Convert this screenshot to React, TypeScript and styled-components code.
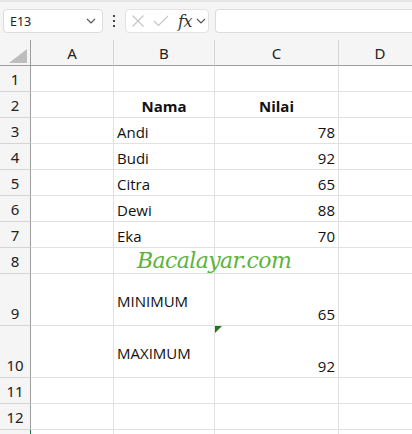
import React from "react";
import styled, { createGlobalStyle } from "styled-components";

const Global = createGlobalStyle`
  html, body { margin: 0; padding: 0; background: #fff; overflow: hidden; }
  body { font-family: "Open Sans", "Noto Sans", sans-serif; }
`;

const Page = styled.div`
  width: 412px;
  height: 434px;
  overflow: hidden;
  display: flex;
  flex-direction: column;
  background: #fff;
`;

const Toolbar = styled.div`
  height: 40px;
  flex-shrink: 0;
  box-sizing: border-box;
  background: #f5f5f5;
  border-top: 2px solid #e6e6e6;
  display: flex;
  align-items: flex-start;
  padding: 7px 0 0 3px;
`;

const NameBox = styled.div`
  width: 100px;
  height: 24px;
  box-sizing: border-box;
  background: #fff;
  border: 1px solid #dcdcdc;
  border-radius: 4px;
  display: flex;
  align-items: center;
  justify-content: space-between;
  padding: 0 6px 0 6px;
  font-family: "Noto Sans", sans-serif;
  font-size: 12.5px;
  color: #222;
`;

const Dots = styled.div`
  width: 22px;
  height: 24px;
  display: flex;
  align-items: center;
  justify-content: center;
`;

const FxBox = styled.div`
  width: 84px;
  height: 24px;
  box-sizing: border-box;
  background: #fff;
  border: 1px solid #e2e2e2;
  border-radius: 4px;
  display: flex;
  align-items: center;
  padding: 0 0 0 5px;
`;

const FxText = styled.span`
  font-family: "DejaVu Serif", "Liberation Serif", serif;
  font-style: italic;
  font-size: 16px;
  color: #333;
  margin-left: 9px;
  letter-spacing: -0.5px;
`;

const ChevronSlot = styled.span`
  margin-left: 4px;
  display: flex;
`;

const FormulaInput = styled.div`
  flex: 1;
  height: 24px;
  margin-left: 6px;
  box-sizing: border-box;
  background: #fff;
  border: 1px solid #dcdcdc;
  border-right: none;
  border-radius: 4px 0 0 4px;
`;

const Grid = styled.div`
  display: grid;
  grid-template-columns: 31px 83px 101px 124px 83px;
  grid-template-rows: 26px repeat(8, 26px) 52px 52px 26px 26px 26px;
`;

const Corner = styled.div`
  background: #f5f5f5;
  border-right: 1px solid #9e9e9e;
  border-bottom: 1px solid #9e9e9e;
  box-sizing: border-box;
  position: relative;
`;

const CornerTri = styled.svg`
  position: absolute;
  left: 9px;
  top: 9px;
`;

const ColHead = styled.div`
  background: #f5f5f5;
  border-right: 1px solid #d4d4d4;
  border-bottom: 1px solid #9e9e9e;
  box-sizing: border-box;
  display: flex;
  align-items: center;
  justify-content: center;
  font-family: "Noto Sans", sans-serif;
  font-size: 15px;
  color: #222;
`;

const RowHead = styled.div<{ $sel?: boolean }>`
  background: #f5f5f5;
  border-right: 1px solid ${(p) => (p.$sel ? "#1e7145" : "#9e9e9e")};
  border-bottom: 1px solid #d4d4d4;
  box-sizing: border-box;
  display: flex;
  align-items: flex-end;
  justify-content: center;
  padding-bottom: 2px;
  font-family: "Noto Sans", sans-serif;
  font-size: 15px;
  color: #222;
`;

const Cell = styled.div<{ $align?: "left" | "right" | "center"; $bold?: boolean }>`
  border-right: 1px solid #e1e1e1;
  border-bottom: 1px solid #e1e1e1;
  box-sizing: border-box;
  position: relative;
  display: flex;
  flex-direction: column;
  justify-content: flex-end;
  align-items: ${(p) =>
    p.$align === "right" ? "flex-end" : p.$align === "center" ? "center" : "flex-start"};
  padding: 0 3px 2px 3px;
  font-family: "Open Sans", sans-serif;
  font-size: 15px;
  font-weight: ${(p) => (p.$bold ? 700 : 400)};
  color: #111;
  line-height: 18px;
`;

const TwoLine = styled.div`
  display: flex;
  flex-direction: column;
  line-height: 18px;
`;

const Spacer = styled.span`
  height: 13px;
`;

const ErrorMark = styled.div`
  position: absolute;
  left: 0;
  top: 0;
  width: 0;
  height: 0;
  border-top: 7px solid #1e7a1e;
  border-right: 7px solid transparent;
`;

const Watermark = styled.div`
  position: absolute;
  left: 137px;
  top: 208px;
  font-family: "DejaVu Serif", "Liberation Serif", serif;
  font-style: italic;
  font-size: 22px;
  color: #5db33b;
  letter-spacing: -0.6px;
  pointer-events: none;
`;

const Wrap = styled.div`
  position: relative;
`;

const Chevron = () => (
  <svg width="10" height="6" viewBox="0 0 10 6">
    <path d="M1 1 L5 5 L9 1" fill="none" stroke="#555" strokeWidth="1.2" />
  </svg>
);

const cols = ["A", "B", "C", "D"];

type Row = { n: number; b?: string; c?: string; bold?: boolean; mark?: boolean; tall?: boolean };

const rows: Row[] = [
  { n: 1 },
  { n: 2, b: "Nama", c: "Nilai", bold: true },
  { n: 3, b: "Andi", c: "78" },
  { n: 4, b: "Budi", c: "92" },
  { n: 5, b: "Citra", c: "65" },
  { n: 6, b: "Dewi", c: "88" },
  { n: 7, b: "Eka", c: "70" },
  { n: 8 },
  { n: 9, b: "MINIMUM", c: "65", tall: true },
  { n: 10, b: "MAXIMUM", c: "92", mark: true, tall: true },
  { n: 11 },
  { n: 12 },
  { n: 13 },
];

export default function App() {
  return (
    <Page>
      <Global />
      <Toolbar>
        <NameBox>
          <span>E13</span>
          <Chevron />
        </NameBox>
        <Dots>
          <svg width="4" height="12" viewBox="0 0 4 12">
            <rect x="1" y="0" width="2" height="2" fill="#444" />
            <rect x="1" y="5" width="2" height="2" fill="#444" />
            <rect x="1" y="10" width="2" height="2" fill="#444" />
          </svg>
        </Dots>
        <FxBox>
          <svg width="14" height="14" viewBox="0 0 14 14">
            <path d="M1.5 1.5 L12.5 12.5 M12.5 1.5 L1.5 12.5" stroke="#c4c4c4" strokeWidth="1.1" />
          </svg>
          <svg width="16" height="12" viewBox="0 0 16 12" style={{ marginLeft: 8 }}>
            <path d="M1 6 L5.5 10.5 L15 1" fill="none" stroke="#c4c4c4" strokeWidth="1.1" />
          </svg>
          <FxText>fx</FxText>
          <ChevronSlot>
            <Chevron />
          </ChevronSlot>
        </FxBox>
        <FormulaInput />
      </Toolbar>
      <Wrap>
        <Grid>
          <Corner>
            <CornerTri width="18" height="14" viewBox="0 0 18 14">
              <path d="M18 0 L18 14 L0 14 Z" fill="#bdbdbd" />
            </CornerTri>
          </Corner>
          {cols.map((c) => (
            <ColHead key={c}>{c}</ColHead>
          ))}
          {rows.map((r) => (
            <React.Fragment key={r.n}>
              <RowHead $sel={r.n === 13}>{r.n === 13 ? "" : r.n}</RowHead>
              <Cell />
              <Cell $align={r.bold ? "center" : "left"} $bold={r.bold}>
                {r.tall ? (
                  <TwoLine>
                    <span>{r.b}</span>
                    <Spacer />
                  </TwoLine>
                ) : (
                  r.b
                )}
              </Cell>
              <Cell $align={r.bold ? "center" : "right"} $bold={r.bold}>
                {r.mark && <ErrorMark />}
                {r.c}
              </Cell>
              <Cell />
            </React.Fragment>
          ))}
        </Grid>
        <Watermark>Bacalayar.com</Watermark>
      </Wrap>
    </Page>
  );
}
